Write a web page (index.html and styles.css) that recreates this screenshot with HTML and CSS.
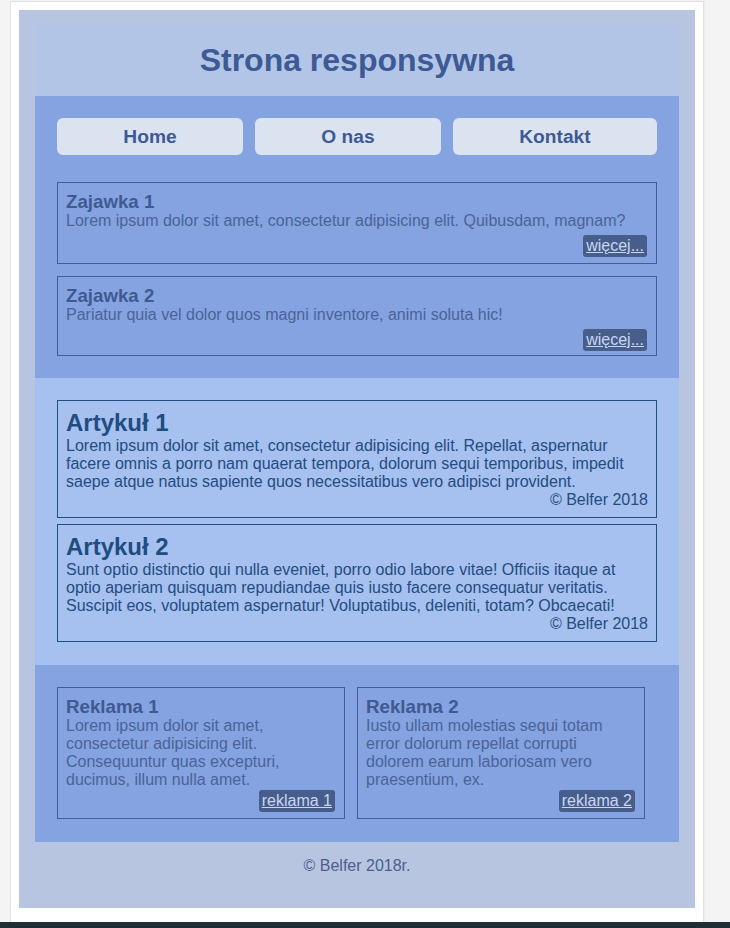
FILE: index.html
```html
<!DOCTYPE html>
<html lang="pl">
<head>
<meta charset="utf-8">
<title>Strona responsywna</title>
<link rel="stylesheet" href="styles.css">
</head>
<body>
<div class="frame">
  <div class="page">
    <header class="top">
      <h1 class="title">Strona responsywna</h1>
    </header>
    <section class="nav-section">
      <nav class="menu">
        <a class="menu-item" href="#">Home</a>
        <a class="menu-item" href="#">O nas</a>
        <a class="menu-item" href="#">Kontakt</a>
      </nav>
      <div class="teasers">
        <div class="teaser">
          <h3 class="teaser-title">Zajawka 1</h3>
          <p class="teaser-text">Lorem ipsum dolor sit amet, consectetur adipisicing elit. Quibusdam, magnam?</p>
          <div class="link-row"><a class="btn-link" href="#">więcej...</a></div>
        </div>
        <div class="teaser teaser-short">
          <h3 class="teaser-title">Zajawka 2</h3>
          <p class="teaser-text">Pariatur quia vel dolor quos magni inventore, animi soluta hic!</p>
          <div class="link-row"><a class="btn-link" href="#">więcej...</a></div>
        </div>
      </div>
    </section>
    <section class="articles">
      <article class="article">
        <h2 class="article-title">Artykuł 1</h2>
        <p class="article-text">Lorem ipsum dolor sit amet, consectetur adipisicing elit. Repellat, aspernatur facere omnis a porro nam quaerat tempora, dolorum sequi temporibus, impedit saepe atque natus sapiente quos necessitatibus vero adipisci provident.</p>
        <p class="article-sign">© Belfer 2018</p>
      </article>
      <article class="article">
        <h2 class="article-title">Artykuł 2</h2>
        <p class="article-text">Sunt optio distinctio qui nulla eveniet, porro odio labore vitae! Officiis itaque at optio aperiam quisquam repudiandae quis iusto facere consequatur veritatis. Suscipit eos, voluptatem aspernatur! Voluptatibus, deleniti, totam? Obcaecati!</p>
        <p class="article-sign">© Belfer 2018</p>
      </article>
    </section>
    <section class="ads">
      <div class="ad">
        <h3 class="teaser-title">Reklama 1</h3>
        <p class="teaser-text">Lorem ipsum dolor sit amet, consectetur adipisicing elit. Consequuntur quas excepturi, ducimus, illum nulla amet.</p>
        <div class="link-row ad-link-row"><a class="btn-link" href="#">reklama 1</a></div>
      </div>
      <div class="ad">
        <h3 class="teaser-title">Reklama 2</h3>
        <p class="teaser-text">Iusto ullam molestias sequi totam error dolorum repellat corrupti dolorem earum laboriosam vero praesentium, ex.</p>
        <div class="link-row ad-link-row"><a class="btn-link" href="#">reklama 2</a></div>
      </div>
    </section>
    <footer class="foot">© Belfer 2018r.</footer>
  </div>
</div>
<div class="bottom-bar"></div>
</body>
</html>
```

FILE: styles.css
```css
* { box-sizing: border-box; }

html, body {
  margin: 0;
  padding: 0;
  background: #f4f4f4;
  font-family: "Liberation Sans", Arial, sans-serif;
  font-size: 16px;
  overflow: hidden;
}

body {
  padding-top: 1px;
}

.frame {
  margin-left: 10px;
  width: 694px;
  background: #ffffff;
  border: 1px solid #e1e1e1;
  border-bottom: none;
  padding: 8px 8px 14px 8px;
  box-shadow: 1px 0 2px rgba(0, 0, 0, 0.04);
}

.page {
  background: #b7c5e0;
  padding: 15px 16px 16px 16px;
}

.top {
  background: #b3c5e7;
  padding: 17px 0;
}

.title {
  margin: 0;
  text-align: center;
  font-size: 32px;
  line-height: 37px;
  font-weight: bold;
  color: #3d5a94;
}

.nav-section {
  background: #84a3e0;
  padding: 22px;
}

.menu {
  display: flex;
  gap: 12px;
}

.menu-item {
  flex: 1 1 auto;
  background: #dce3f0;
  border-radius: 6px;
  text-align: center;
  padding: 8px 0;
  font-size: 19.2px;
  line-height: 21px;
  font-weight: bold;
  color: #3d5a94;
  text-decoration: none;
}

.teasers {
  margin-top: 27px;
  display: flex;
  flex-direction: column;
  gap: 12px;
}

.teaser {
  border: 1px solid #3f5d97;
  padding: 8px 8px 6px 8px;
}

.teaser-short {
  padding-bottom: 4px;
}

.teaser-title {
  margin: 0;
  font-size: 18.72px;
  line-height: 21px;
  font-weight: bold;
  color: #3f5a92;
}

.teaser-text {
  margin: 0;
  line-height: 18px;
  color: #4b6399;
}

.link-row {
  margin-top: 5px;
  text-align: right;
  line-height: 18px;
}

.ad-link-row {
  margin-top: 1px;
}

.btn-link {
  display: inline-block;
  margin-right: 1px;
  padding: 2px 3px;
  border-radius: 3px;
  background: #475d8a;
  color: #c9d6f3;
  text-decoration: underline;
  line-height: 18px;
}

.articles {
  background: #a6c0f0;
  padding: 22px 22px 23px 22px;
  display: flex;
  flex-direction: column;
  gap: 6px;
}

.article {
  border: 1px solid #214f80;
  padding: 8px;
}

.article-title {
  margin: 0;
  font-size: 24px;
  line-height: 28px;
  font-weight: bold;
  color: #1f4d80;
}

.article-text {
  margin: 0;
  line-height: 18px;
  color: #254c7e;
}

.article-sign {
  margin: 0;
  text-align: right;
  line-height: 18px;
  color: #254c7e;
}

.ads {
  background: #84a3e0;
  padding: 22px 22px 23px 22px;
  display: flex;
  gap: 12px;
}

.ad {
  width: 288px;
  border: 1px solid #3f5d97;
  padding: 8px 8px 6px 8px;
}

.foot {
  padding: 15px 0 17px 0;
  text-align: center;
  line-height: 18px;
  color: #4b5f8f;
}

.bottom-bar {
  height: 40px;
  background: #1f2f38;
}
```
